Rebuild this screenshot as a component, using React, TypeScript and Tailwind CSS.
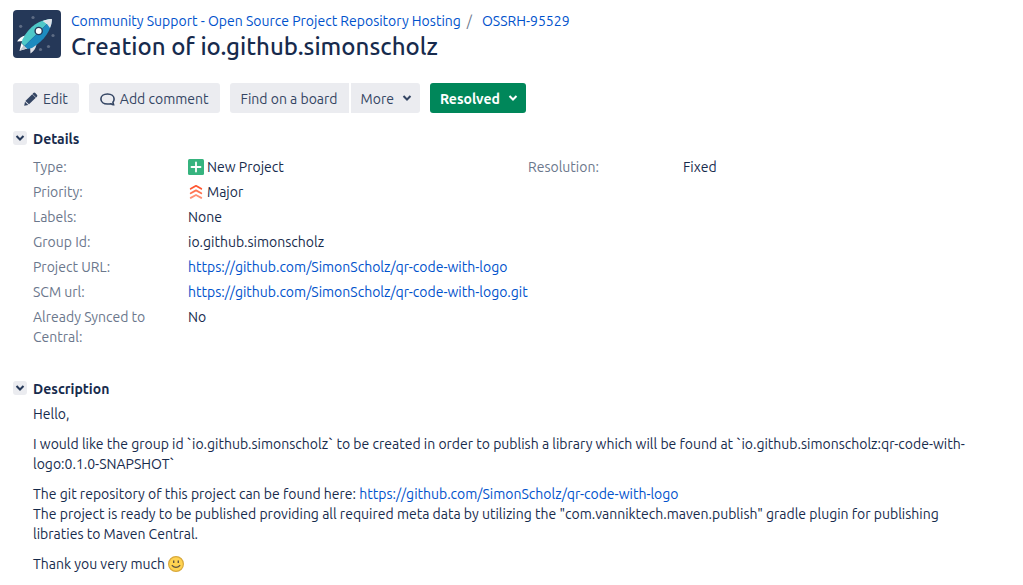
import type { ReactNode } from "react";

const REPO = "https://github.com/SimonScholz/qr-code-with-logo";

function Rocket() {
  return (
    <svg viewBox="0 0 48 48" className="size-12 shrink-0 rounded" role="img" aria-label="Project avatar">
      <rect width="48" height="48" fill="#253858" />
      <g fill="#5e6c84">
        <circle cx="20" cy="7.5" r="1.6" />
        <circle cx="7.7" cy="16.3" r="1.6" />
        <circle cx="40" cy="25.5" r="1.6" />
        <circle cx="35.5" cy="36.5" r="1.6" />
        <circle cx="27.5" cy="39.5" r="1.6" />
      </g>
      <path d="M13 25.5 C8.5 26 5.500 29 4.200 31.600 L10.500 31 Z" fill="#fff" />
      <path d="M23.500 34.500 C23 38.500 20.500 41.500 17.500 43.500 L17 36.500 Z" fill="#dfe1e6" />
      <path d="M8.500 33 L6.500 40.800 L14.500 38.500 L10.500 35.500 Z" fill="#fff" />
      <path d="M10.500 35.500 L6.500 40.800 L15 38 Z" fill="#c1c7d0" />
      <path d="M39 9 C27 9.500 16.500 15.500 9.500 29.500 L8.500 33 L11.500 36 Z" fill="#4fc8c8" />
      <path d="M39 9 C38.500 20 31.500 30.500 19 38 L14.500 39 L11.500 36 Z" fill="#1d8bc0" />
      <path d="M39 9 C36 9 32.800 9.800 30 11 L34 14 Z" fill="#fff" />
      <path d="M39 9 C39 12 38.500 15 37 18 L34 14 L30 11 Z" fill="#dfe1e6" />
      <circle cx="25.700" cy="21" r="3.600" fill="#fff" stroke="#253858" strokeWidth="1.400" />
    </svg>
  );
}

function Chevron({ className = "" }: { className?: string }) {
  return (
    <svg viewBox="0 0 10 8" className={`h-2 w-2.5 ${className}`} aria-hidden="true">
      <path d="M1.500 2 L5 5.500 L8.500 2" fill="none" stroke="currentColor" strokeWidth="2" />
    </svg>
  );
}

function Pencil() {
  return (
    <svg viewBox="0 0 14 14" className="size-3.5" fill="currentColor" aria-hidden="true">
      <path d="M9.300 1.100 Q10.300 0.100 11.300 1.100 L12.900 2.700 Q13.900 3.700 12.900 4.700 L12.100 5.500 L8.500 1.900 Z" />
      <path d="M8.200 2.200 L11.800 5.800 L5 12.300 L1.400 8.900 Z" />
      <path d="M1 9.700 L4.300 12.900 L0.200 13.800 Z" />
    </svg>
  );
}

function Bubble() {
  return (
    <svg viewBox="0 0 15 13" className="h-[13px] w-[15px]" fill="none" stroke="currentColor" strokeWidth="1.600" aria-hidden="true">
      <path d="M7.500 1 C3.600 1 0.900 3 0.900 6 C0.900 9 3.600 11 7.500 11 C9 11 10.300 10.800 11.300 10.900 C12 11.500 12.800 11.800 13.600 11.700 L12.900 9.300 C13.700 8.400 14.100 7.300 14.100 6 C14.100 3 11.400 1 7.500 1 Z" />
    </svg>
  );
}

function PlusIcon() {
  return (
    <svg viewBox="0 0 16 16" className="size-4 shrink-0" aria-hidden="true">
      <rect width="16" height="16" rx="1.500" fill="#36b37e" />
      <path d="M8 3.500 V12.500 M3.500 8 H12.500" stroke="#fff" strokeWidth="1.800" strokeLinecap="round" />
    </svg>
  );
}

function MajorIcon() {
  return (
    <svg viewBox="0 0 16 16" className="size-4 shrink-0" fill="none" strokeWidth="1.800" strokeLinecap="round" strokeLinejoin="round" aria-hidden="true">
      <path d="M2.700 4.700 L8 1.800 L13.300 4.700" stroke="#ff5630" />
      <path d="M2.700 9.300 L8 6.400 L13.300 9.300" stroke="#ff7452" />
      <path d="M2.700 13.900 L8 11 L13.300 13.900" stroke="#ff8f73" />
    </svg>
  );
}

function Smile() {
  return (
    <svg viewBox="0 0 16 16" className="inline-block size-4 align-text-bottom" role="img" aria-label="smile">
      <circle cx="8" cy="8" r="7.400" fill="#ffd351" stroke="#d9a93c" strokeWidth="1.200" />
      <path d="M5.700 4.500 V7 M10.300 4.500 V7" stroke="#5e5340" strokeWidth="1.400" />
      <path d="M3.800 9.300 Q8 13.400 12.200 9.300" fill="none" stroke="#5e5340" strokeWidth="1.200" />
    </svg>
  );
}

function Link({ href, children }: { href: string; children: ReactNode }) {
  return (
    <a href={href} className="text-[#0052cc] hover:underline">
      {children}
    </a>
  );
}

function Field({ label, children }: { label: string; children: ReactNode }) {
  return (
    <div className="flex">
      <dt className="w-[155px] shrink-0 pr-5 text-[#6b778c]">{label}</dt>
      <dd className="flex min-w-0 items-center gap-[3px] self-start">{children}</dd>
    </div>
  );
}

function Section({ title, children }: { title: string; children: ReactNode }) {
  return (
    <section>
      <h2 className="flex items-center gap-1.5 font-bold">
        <button type="button" aria-label={`Toggle ${title}`} className="mb-0.5 flex size-3.5 items-center justify-center rounded-[3px] bg-[#ebecf0] text-[#253858]">
          <Chevron />
        </button>
        {title}
      </h2>
      {children}
    </section>
  );
}

const plain = "flex h-[30px] items-center bg-[#ebecf0] pt-0.5 text-[#344563]";

export default function App() {
  return (
    <main className="bg-white py-2.5 pl-[13px] font-['Ubuntu','Open_Sans',sans-serif] text-sm leading-5 text-[#172b4d]">
      <header className="flex gap-2.5">
        <Rocket />
        <div className="pt-px">
          <nav aria-label="Breadcrumb" className="flex gap-1.5">
            <Link href="#project">Community Support - Open Source Project Repository Hosting</Link>
            <span className="pr-1 text-[#6b778c]">/</span>
            <Link href="#OSSRH-95529">OSSRH-95529</Link>
          </nav>
          <h1 className="text-2xl leading-8 font-medium">Creation of io.github.simonscholz</h1>
        </div>
      </header>

      <div className="mt-5 flex flex-wrap gap-2.5">
        <button type="button" className={`${plain} gap-[5px] rounded-[3px] px-[11px]`}>
          <Pencil />
          Edit
        </button>
        <button type="button" className={`${plain} gap-[5px] rounded-[3px] px-[11px]`}>
          <Bubble />
          Add comment
        </button>
        <div className="flex gap-0.5">
          <button type="button" className={`${plain} rounded-l-[3px] px-[11px]`}>
            Find on a board
          </button>
          <button type="button" className={`${plain} gap-2 rounded-r-[3px] pr-2 pl-2.5`}>
            More
            <Chevron className="mb-0.5" />
          </button>
        </div>
        <button type="button" className="flex h-[30px] items-center gap-2 rounded-[3px] bg-[#00875a] pt-0.5 pr-2 pl-2.5 font-bold text-white">
          Resolved
          <Chevron className="mb-0.5" />
        </button>
      </div>

      <div className="mt-4 flex flex-col gap-8">
        <Section title="Details">
          <dl className="mt-2 grid grid-cols-2 pl-5">
            <div className="flex flex-col gap-[5px]">
              <Field label="Type:">
                <PlusIcon />
                New Project
              </Field>
              <Field label="Priority:">
                <MajorIcon />
                Major
              </Field>
              <Field label="Labels:">None</Field>
              <Field label="Group Id:">io.github.simonscholz</Field>
              <Field label="Project URL:">
                <Link href={REPO}>{REPO}</Link>
              </Field>
              <Field label="SCM url:">
                <Link href={`${REPO}.git`}>{`${REPO}.git`}</Link>
              </Field>
              <Field label="Already Synced to Central:">No</Field>
            </div>
            <div>
              <Field label="Resolution:">Fixed</Field>
            </div>
          </dl>
        </Section>

        <Section title="Description">
          <div className="mt-[5px] flex flex-col gap-2.5 pr-10 pl-5">
            <p>Hello,</p>
            <p>
              I would like the group id `io.github.simonscholz` to be created in order to publish a library which will
              be found at `io.github.simonscholz:qr-code-with-logo:0.1.0-SNAPSHOT`
            </p>
            <p>
              The git repository of this project can be found here: <Link href={REPO}>{REPO}</Link>
              <br />
              The project is ready to be published providing all required meta data by utilizing the
              "com.vanniktech.maven.publish" gradle plugin for publishing libraties to Maven Central.
            </p>
            <p>
              Thank you very much <Smile />
            </p>
          </div>
        </Section>
      </div>
    </main>
  );
}
